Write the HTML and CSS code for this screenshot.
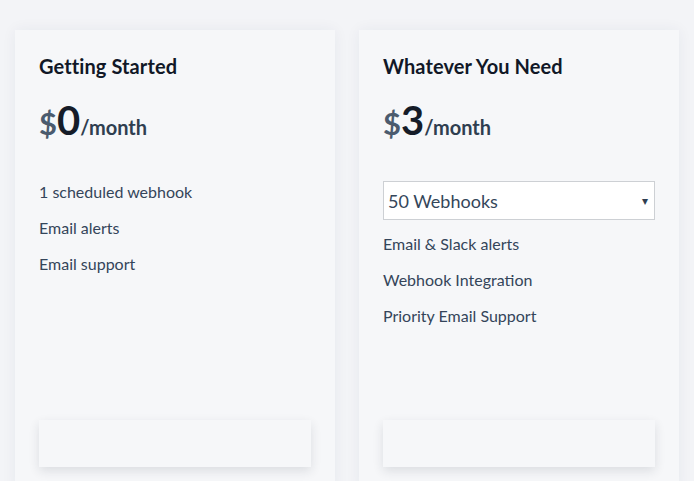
FILE: index.html
```html
<!DOCTYPE html>
<html>
<head>
<meta charset="utf-8">
<link rel="stylesheet" href="styles.css">
</head>
<body>
<div class="plans">
  <div class="card">
    <h2 class="title">Getting Started</h2>
    <div class="price"><span class="cur">$</span><span class="amt">0</span><span class="per">/month</span></div>
    <ul class="features">
      <li>1 scheduled webhook</li>
      <li>Email alerts</li>
      <li>Email support</li>
    </ul>
    <div class="btn"></div>
  </div>
  <div class="card">
    <h2 class="title">Whatever You Need</h2>
    <div class="price"><span class="cur">$</span><span class="amt">3</span><span class="per">/month</span></div>
    <div class="select"><span>50 Webhooks</span><span class="arrow">▾</span></div>
    <ul class="features">
      <li>Email &amp; Slack alerts</li>
      <li>Webhook Integration</li>
      <li>Priority Email Support</li>
    </ul>
    <div class="btn"></div>
  </div>
</div>
</body>
</html>
```
FILE: styles.css
```css
html, body {
  margin: 0;
  padding: 0;
}
body {
  background: #f3f4f7;
  font-family: Lato, "Open Sans", sans-serif;
  width: 694px;
  height: 481px;
  overflow: hidden;
}
.plans {
  display: flex;
  gap: 24px;
  padding: 30px 0 0 15px;
}
.card {
  width: 320px;
  flex: none;
  box-sizing: border-box;
  height: 461px;
  padding: 24px 24px;
  background: #f6f7f9;
  box-shadow: 0 0 14px rgba(40, 50, 90, 0.06);
  display: flex;
  flex-direction: column;
}
.title {
  margin: 0 0 18px;
  font-size: 20px;
  line-height: 24px;
  font-weight: 700;
  color: #111827;
  letter-spacing: 0.1px;
}
.price {
  height: 48px;
  line-height: 48px;
  white-space: nowrap;
}
.cur {
  font-size: 31px;
  font-weight: 700;
  color: #4b5b6e;
}
.amt {
  font-size: 40px;
  font-weight: 700;
  color: #151c28;
}
.per {
  font-size: 20px;
  font-weight: 700;
  color: #2f3e50;
}
.select {
  margin-top: 37px;
  height: 39px;
  box-sizing: border-box;
  border: 1px solid #cdd0d4;
  background: #ffffff;
  display: flex;
  align-items: center;
  justify-content: space-between;
  padding: 0 6px 0 4px;
  font-size: 18px;
  color: #34465a;
}
.arrow {
  font-size: 12px;
  color: #2f3e50;
}
.select + .features {
  margin-top: 6px;
}
.features {
  list-style: none;
  margin: 30px 0 0;
  padding: 0;
}
.features li {
  font-size: 16px;
  line-height: 36px;
  color: #34455a;
}
.btn {
  margin-top: auto;
  height: 47px;
  background: #f6f7f9;
  box-shadow: 0 4px 10px rgba(30, 40, 60, 0.12);
}
```
